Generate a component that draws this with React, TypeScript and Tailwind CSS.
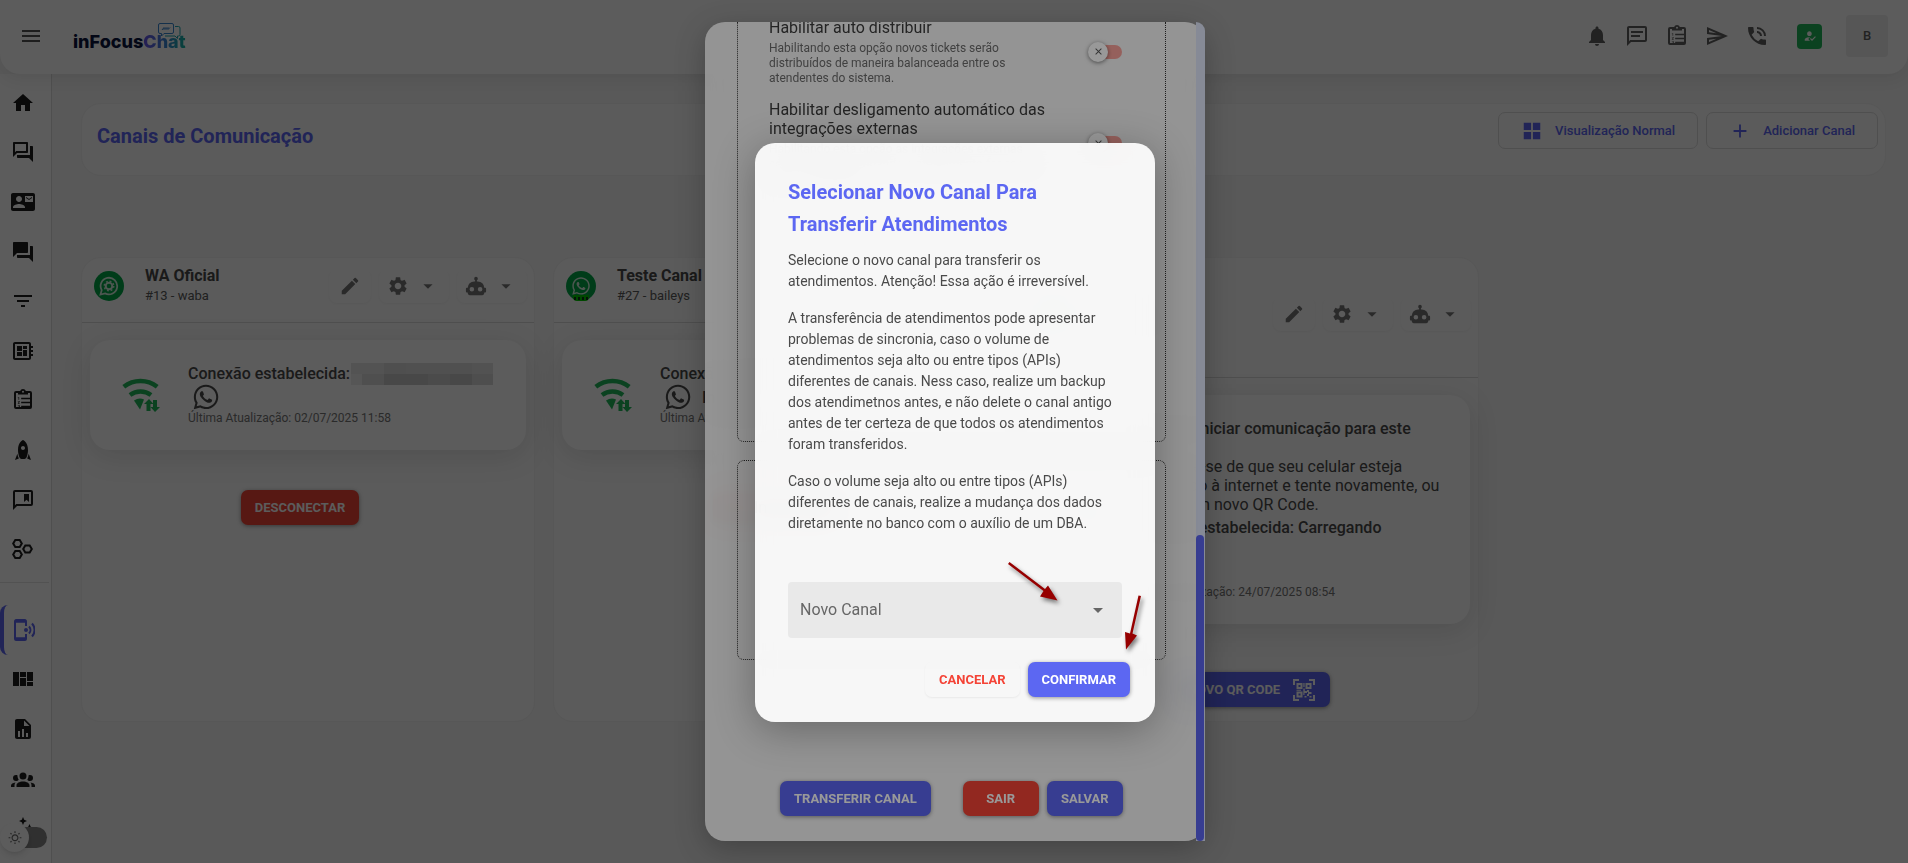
import clsx from "clsx";
import React, { ReactNode } from "react";
import { FaWhatsapp } from "react-icons/fa";
import {
  MdAdd,
  MdArrowDropDown,
  MdClose,
  MdContactMail,
  MdDeveloperBoard,
  MdEdit,
  MdFilterList,
  MdFormatListNumbered,
  MdForum,
  MdHowToReg,
  MdMenu,
  MdNotifications,
  MdOutlineForum,
  MdOutlineSettings,
  MdOutlineWbSunny,
  MdPhoneInTalk,
  MdSettings,
} from "react-icons/md";

const Icon = ({
  d,
  className = "size-6",
}: {
  d: string;
  className?: string;
}) => (
  <svg viewBox="0 0 24 24" className={className} fill="currentColor">
    <path d={d} fillRule="evenodd" />
  </svg>
);

const paths = {
  home: "M10,20V14H14V20H19V12H22L12,3L2,12H5V20H10Z",
  rocket:
    "M20 22L16.14 20.45C16.84 18.92 17.34 17.34 17.65 15.73L20 22M7.86 20.45L4 22L6.35 15.73C6.66 17.34 7.16 18.92 7.86 20.45M12 2C12 2 17 4 17 12C17 15.1 16.25 17.75 15.33 19.83C15 20.55 14.29 21 13.5 21H10.5C9.71 21 9 20.55 8.67 19.83C7.76 17.75 7 15.1 7 12C7 4 12 2 12 2M12 12C13.1 12 14 11.1 14 10C14 8.9 13.1 8 12 8C10.9 8 10 8.9 10 10C10 11.1 10.9 12 12 12Z",
  bookmark:
    "M20,2A2,2 0 0,1 22,4V16A2,2 0 0,1 20,18H6L2,22V4A2,2 0 0,1 4,2H20M4,4V17.17L5.17,16H20V4H4M13,6H18V14L15.5,11.8L13,14V6Z",
  panels: "M2,5H8V19H2V5M9,5H15V10H9V5M9,11H15V19H9V11M16,5H22V14H16V5M16,15H22V19H16V15Z",
  report:
    "M13,9H18.5L13,3.5V9M6,2H14L20,8V20A2,2 0 0,1 18,22H6C4.89,22 4,21.1 4,20V4C4,2.89 4.89,2 6,2M7,20H9V14H7V20M11,20H13V12H11V20M15,20H17V16H15V20Z",
  group:
    "M12,5.5A3.5,3.5 0 0,1 15.5,9A3.5,3.5 0 0,1 12,12.5A3.5,3.5 0 0,1 8.5,9A3.5,3.5 0 0,1 12,5.5M5,8C5.56,8 6.08,8.15 6.53,8.42C6.38,9.85 6.8,11.27 7.66,12.38C7.16,13.34 6.16,14 5,14A3,3 0 0,1 2,11A3,3 0 0,1 5,8M19,8A3,3 0 0,1 22,11A3,3 0 0,1 19,14C17.84,14 16.84,13.34 16.34,12.38C17.2,11.27 17.62,9.85 17.47,8.42C17.92,8.15 18.44,8 19,8M5.5,18.25C5.5,16.18 8.41,14.5 12,14.5C15.59,14.5 18.5,16.18 18.5,18.25V20H5.5V18.25M0,20V18.5C0,17.11 1.89,15.94 4.45,15.6C3.86,16.28 3.5,17.22 3.5,18.25V20H0M24,20H20.5V18.25C20.5,17.22 20.14,16.28 19.55,15.6C22.11,15.94 24,17.11 24,18.5V20Z",
  robot:
    "M12,2A2,2 0 0,1 14,4C14,4.74 13.6,5.39 13,5.73V7H14A7,7 0 0,1 21,14H22A1,1 0 0,1 23,15V18A1,1 0 0,1 22,19H21V20A2,2 0 0,1 19,22H5A2,2 0 0,1 3,20V19H2A1,1 0 0,1 1,18V15A1,1 0 0,1 2,14H3A7,7 0 0,1 10,7H11V5.73C10.4,5.39 10,4.74 10,4A2,2 0 0,1 12,2M7.5,13A2.5,2.5 0 0,0 5,15.5A2.5,2.5 0 0,0 7.5,18A2.5,2.5 0 0,0 10,15.5A2.5,2.5 0 0,0 7.5,13M16.5,13A2.5,2.5 0 0,0 14,15.5A2.5,2.5 0 0,0 16.5,18A2.5,2.5 0 0,0 19,15.5A2.5,2.5 0 0,0 16.5,13Z",
  message:
    "M20,2A2,2 0 0,1 22,4V16A2,2 0 0,1 20,18H6L2,22V4C2,2.89 2.9,2 4,2H20M4,4V17.17L5.17,16H20V4H4M6,7H18V9H6V7M6,11H15V13H6V11Z",
  send: "M4 6.03L11.5 9.25L4 8.25L4 6.03M11.5 14.75L4 17.97V15.75L11.5 14.75M2 3L2 10L17 12L2 14L2 21L23 12L2 3Z",
  grid: "M3,11H11V3H3M3,21H11V13H3M13,21H21V13H13M13,3V11H21V3",
};

const Clipboard = () => (
  <svg viewBox="0 0 24 24" className="size-6" fill="currentColor">
    <path
      fillRule="evenodd"
      d="M19,3H14.82C14.4,1.84 13.3,1 12,1S9.6,1.84 9.18,3H5A2,2 0 0,0 3,5V19A2,2 0 0,0 5,21H19A2,2 0 0,0 21,19V5A2,2 0 0,0 19,3M12,2.8A1,1 0 1,1 12,4.8A1,1 0 0,1 12,2.8M5,5H7V6.6H17V5H19V19H5V5Z"
    />
    <MdFormatListNumbered x="5.5" y="6.5" width="13" height="13" />
  </svg>
);

const Hexagons = () => (
  <svg
    viewBox="0 0 24 24"
    className="size-6"
    fill="none"
    stroke="currentColor"
    strokeWidth="2"
  >
    <path d="M4.300 3H8.700L10.800 6.500L8.700 10H4.300L2.200 6.500Z" />
    <path d="M4.300 14H8.700L10.800 17.500L8.700 21H4.300L2.200 17.500Z" />
    <path d="M14.300 8.500H18.700L20.800 12L18.700 15.500H14.300L12.200 12Z" />
  </svg>
);

const CellWireless = () => (
  <svg
    viewBox="0 0 24 24"
    className="size-6"
    fill="none"
    stroke="currentColor"
    strokeWidth="2"
  >
    <path d="M15 8V3.500a1.500 1.500 0 0 0-1.500-1.500h-8A1.500 1.500 0 0 0 4 3.500v17A1.500 1.500 0 0 0 5.500 22h8a1.500 1.500 0 0 0 1.500-1.500V16" />
    <path d="M4 3.200H15M4 20.800H15" strokeWidth="3" />
    <circle cx="15" cy="12" r="2" fill="currentColor" stroke="none" />
    <path d="M18 8.500a5 5 0 0 1 0 7M21 5.500a9.500 9.500 0 0 1 0 13" />
  </svg>
);

const WifiArrows = () => (
  <svg
    viewBox="0 0 38 34"
    className="h-[34px] w-[38px] shrink-0 text-[#21ba5a]"
    fill="currentColor"
  >
    <g fill="none" stroke="currentColor" strokeWidth="4.500">
      <path d="M1.800 8.800a27 27 0 0 1 33.400 0" />
      <path d="M8 17a17.500 17.500 0 0 1 21 0" />
    </g>
    <path d="M12 22.500Q17 19.300 22 21.500L18 31.500Z" />
    <path d="M27 21l4.500 5h-3v7h-4v-7h-2.500zM33 34l-4.500-5h2.500v-7h4v7h3z" />
  </svg>
);

const QrScan = () => (
  <svg viewBox="0 0 24 24" className="size-6" fill="currentColor">
    <path
      d="M2 7V2H7M17 2H22V7M22 17V22H17M7 22H2V17"
      fill="none"
      stroke="currentColor"
      strokeWidth="2"
    />
    <path
      fillRule="evenodd"
      d="M4.500 5H10.500V11H4.500ZM6.500 7V9H8.500V7ZM13.500 5H19.500V11H13.500ZM15.500 7V9H17.500V7ZM4.500 13.500H10.500V19.500H4.500ZM6.500 15.500V17.500H8.500V15.500ZM11.300 5H12.600V9H11.300ZM11.300 10.500H12.800V13H15V15H12.500V17H11.300ZM15 12H17V14H19.500V16H17V18H15V16H16V14H15ZM12.500 18H14.500V19.500H12.500ZM17.500 18H19.500V19.500H17.500ZM4.500 11.700H9V12.700H4.500Z"
    />
  </svg>
);

const Logo = () => (
  <div className="relative mt-1 ml-[30px] h-[30px] w-[112px]">
    <p className="absolute bottom-0 left-0 font-['Inter'] text-[18px] leading-[22px] font-extrabold text-[#0b1440]">
      inFocus
      <span className="bg-linear-to-r from-[#6b50ee] via-[#3a82d8] to-[#12b8a0] bg-clip-text text-transparent">
        Chat
      </span>
    </p>
    <svg
      viewBox="0 0 23 17"
      className="absolute top-0 right-1 h-[17px] w-[23px]"
      fill="none"
      stroke="#3a86d0"
      strokeWidth="1"
    >
      <path d="M2 .500h12a1.500 1.500 0 0 1 1.500 1.500v7A1.500 1.500 0 0 1 14 10.500H6L3.500 13v-2.500H2A1.500 1.500 0 0 1 .500 9V2A1.500 1.500 0 0 1 2 .500Z" />
      <path
        d="M17 3.500h3.500a1.500 1.500 0 0 1 1.500 1.500v6.500a1.500 1.500 0 0 1-1.500 1.500h-1v2.500L17 13H7"
        stroke="#1fa8b0"
      />
      <path d="M4 7l2-2.500v2l2-2v2l2-2v2l2-2" />
    </svg>
  </div>
);

const Header = () => (
  <header className="relative z-10 flex h-[74px] items-center rounded-b-[20px] bg-white pr-5 pb-[2px] pl-[19px] shadow-[0_4px_16px_rgba(0,0,0,0.08)]">
    <button aria-label="Menu" className="text-[#555]">
      <MdMenu className="size-6" />
    </button>
    <Logo />
    <div className="ml-auto flex items-center text-[#616161]">
      <nav className="flex items-center gap-4">
        <button aria-label="Notificações">
          <MdNotifications className="size-6" />
        </button>
        <button aria-label="Mensagens">
          <Icon d={paths.message} />
        </button>
        <button aria-label="Tarefas">
          <Clipboard />
        </button>
        <button aria-label="Enviar">
          <Icon d={paths.send} />
        </button>
        <button aria-label="Ligações">
          <MdPhoneInTalk className="size-6" />
        </button>
      </nav>
      <button
        aria-label="Online"
        className="ml-7 flex size-[25px] items-center justify-center rounded-sm bg-[#21ba5a] text-white"
      >
        <MdHowToReg className="size-[14px]" />
      </button>
      <button className="ml-6 size-[42px] rounded-sm bg-[#f0f0f0] text-[13px] font-medium">
        B
      </button>
    </div>
  </header>
);

const MenuItem = ({
  children,
  active = false,
}: {
  children: ReactNode;
  active?: boolean;
}) => (
  <a
    href="#"
    className={clsx(
      "flex flex-1 items-center pl-[7px]",
      active
        ? "rounded-l-lg border-l-4 border-[#5c67f2] text-[#5c67f2]"
        : "ml-1 text-[#1d1d1d]"
    )}
  >
    {children}
  </a>
);

const Sidebar = () => (
  <aside className="relative w-[52px] shrink-0 overflow-hidden border-r border-[#dcdcdc] bg-white pt-1">
    <div className="flex h-[496px] flex-col">
      <MenuItem>
        <Icon d={paths.home} />
      </MenuItem>
      <MenuItem>
        <MdOutlineForum className="size-6" />
      </MenuItem>
      <MenuItem>
        <MdContactMail className="size-6" />
      </MenuItem>
      <MenuItem>
        <MdForum className="size-6" />
      </MenuItem>
      <MenuItem>
        <MdFilterList className="size-6" />
      </MenuItem>
      <MenuItem>
        <MdDeveloperBoard className="size-6" />
      </MenuItem>
      <MenuItem>
        <Clipboard />
      </MenuItem>
      <MenuItem>
        <Icon d={paths.rocket} />
      </MenuItem>
      <MenuItem>
        <Icon d={paths.bookmark} />
      </MenuItem>
      <MenuItem>
        <Hexagons />
      </MenuItem>
    </div>
    <hr className="mt-2 mr-[2px] mb-[22px] border-[#e4e4e4]" />
    <div className="flex h-[248px] flex-col">
      <MenuItem active>
        <CellWireless />
      </MenuItem>
      <MenuItem>
        <Icon d={paths.panels} />
      </MenuItem>
      <MenuItem>
        <Icon d={paths.report} />
      </MenuItem>
      <MenuItem>
        <Icon d={paths.group} />
      </MenuItem>
      <MenuItem>
        <Icon d="M12 1l1.200 2.800L16 5l-2.800 1.200L12 9l-1.200-2.800L8 5l2.800-1.200zM18.500 8l1.200 2.800 2.800 1.200-2.800 1.200-1.200 2.800-1.200-2.800-2.800-1.200 2.800-1.200z" />
      </MenuItem>
    </div>
    <button
      aria-label="Tema"
      className="absolute bottom-3 left-0 h-7 w-[47px]"
    >
      <span className="absolute top-1 right-0 h-[21px] w-9 rounded-full bg-[#868686]" />
      <span className="absolute top-0 left-0 flex size-[29px] items-center justify-center rounded-full bg-white text-[#6a6a6a] shadow-md">
        <MdOutlineWbSunny className="size-[14px]" />
      </span>
    </button>
  </aside>
);

const Button = ({
  color,
  children,
  className,
}: {
  color: "primary" | "negative" | "flat";
  children: ReactNode;
  className?: string;
}) => (
  <button
    className={clsx(
      "flex h-[35px] items-center justify-center gap-3 rounded-[7px] px-[14px] text-[13px] font-bold whitespace-nowrap",
      color === "primary" &&
        "bg-[#5c67f2] text-white shadow-[0_1px_4px_rgba(0,0,0,0.4)]",
      color === "negative" &&
        "bg-[#f44336] text-white shadow-[0_1px_4px_rgba(0,0,0,0.4)]",
      color === "flat" && "text-[#f44336] shadow-[0_1px_2px_rgba(0,0,0,0.06)]",
      className
    )}
  >
    {children}
  </button>
);

const CardActions = () => (
  <div className="flex shrink-0 gap-2 text-[#777]">
    <button
      aria-label="Editar"
      className="flex h-[34px] w-[42px] items-center justify-center rounded-lg shadow-[0_1px_2px_rgba(0,0,0,0.04)]"
    >
      <MdEdit className="size-[22px]" />
    </button>
    <button
      aria-label="Configurações"
      className="flex h-[34px] w-[70px] items-center justify-between rounded-lg pr-[10px] pl-2 shadow-[0_1px_2px_rgba(0,0,0,0.04)]"
    >
      <MdSettings className="size-[22px]" />
      <MdArrowDropDown className="size-[22px]" />
    </button>
    <button
      aria-label="Chatbot"
      className="flex h-[34px] w-[70px] items-center justify-between rounded-lg pr-[10px] pl-2 shadow-[0_1px_2px_rgba(0,0,0,0.04)]"
    >
      <Icon d={paths.robot} className="size-[22px]" />
      <MdArrowDropDown className="size-[22px]" />
    </button>
  </div>
);

const ChannelCard = ({
  badge,
  name,
  detail,
  tall = false,
  action,
  children,
}: {
  badge: ReactNode;
  name: string;
  detail: string;
  tall?: boolean;
  action: ReactNode;
  children: ReactNode;
}) => (
  <section className="flex w-[454px] shrink-0 flex-col rounded-[20px] border border-[#f3f3f3] bg-[#fdfdfd]">
    <div
      className={clsx(
        "flex items-center border-b border-[#dadada] pr-[7px] pb-2 pl-3",
        tall ? "h-[120px]" : "h-[65px]"
      )}
    >
      {badge}
      <div className="mr-auto ml-[21px]">
        <h2 className="text-[16px] leading-5 font-bold text-[#4a4a4a]">
          {name}
        </h2>
        <p className="text-[13px] leading-5 text-[#5a5a5a]">{detail}</p>
      </div>
      <CardActions />
    </div>
    <div className="mx-2 mt-[17px] flex items-center rounded-[20px] bg-white py-6 pr-4 pl-8 shadow-[0_6px_30px_rgba(0,0,0,0.12)]">
      <WifiArrows />
      <div className="ml-7 text-[16px] leading-[19px] text-[#4a4a4a]">
        {children}
      </div>
    </div>
    <div
      className={clsx(
        "mb-[14px] flex justify-center",
        tall ? "mt-12" : "mt-10 pr-4"
      )}
    >
      {action}
    </div>
  </section>
);

const WabaBadge = () => (
  <span className="flex size-[30px] shrink-0 items-center justify-center rounded-full bg-[#00a848] text-[#d5f0df]">
    <svg viewBox="0 0 20 20" className="size-5" fill="none">
      <path
        d="M1.500 18.500l1.200-4.300A8.300 8.300 0 1 1 6 17.400Z"
        stroke="currentColor"
        strokeWidth="1.800"
      />
      <circle
        cx="10"
        cy="10"
        r="3.300"
        stroke="currentColor"
        strokeWidth="2"
      />
      <circle
        cx="10"
        cy="10"
        r="4.800"
        stroke="currentColor"
        strokeWidth="1.400"
        strokeDasharray="1.900 1.870"
      />
    </svg>
  </span>
);

const BaileysBadge = () => (
  <span className="relative flex size-[30px] shrink-0 items-center justify-center rounded-full bg-[#00a848] text-[#d5f0df]">
    <FaWhatsapp className="size-5" />
    <span className="absolute bottom-0 flex h-[6px] w-4 items-center justify-center gap-[2px] rounded-b-sm bg-[#00c800]">
      <i className="h-[3px] w-[2px] bg-[#0a3a14]" />
      <i className="h-[3px] w-[2px] bg-[#0a3a14]" />
      <i className="h-[3px] w-[2px] bg-[#0a3a14]" />
      <i className="h-[3px] w-[2px] bg-[#0a3a14]" />
    </span>
  </span>
);

const MaskedNumber = () => (
  <span className="ml-px inline-flex h-[22px] w-[142px] flex-col align-middle">
    <span className="flex h-[11px] bg-[#e0e0e0]">
      <span className="w-[33px] bg-[#e8e8e8]" />
      <span className="w-[22px] bg-[#dddddd]" />
      <span className="ml-auto w-[21px] bg-[#e4e4e4]" />
    </span>
    <span className="flex h-[11px]">
      <span className="w-[11px] bg-[#eeeeee]" />
      <span className="w-[22px] bg-[#dcdcdc]" />
      <span className="w-[44px] bg-[#c8c8c8]" />
      <span className="w-[22px] bg-[#d2d2d2]" />
      <span className="w-[22px] bg-[#c9c9c9]" />
      <span className="w-[21px] bg-[#dadada]" />
    </span>
  </span>
);

const Channels = () => (
  <main className="min-w-0 flex-1 overflow-hidden pt-[29px] pr-[22px] pl-[29px]">
    <div className="flex h-[73px] items-start rounded-[20px] border border-[#f3f3f3] bg-[#fdfdfd] pt-2 pr-[7px] pl-[15px]">
      <h1 className="mt-2 text-[20px] leading-8 font-bold text-[#5c67f2]">
        Canais de Comunicação
      </h1>
      <div className="ml-auto flex gap-2 text-[13px] font-medium text-[#5c67f2]">
        <button className="flex h-[37px] items-center gap-3 rounded-[7px] border border-[#dcdcdc] px-[22px]">
          <Icon d={paths.grid} className="size-[22px]" />
          Visualização Normal
        </button>
        <button className="flex h-[37px] items-center gap-3 rounded-[7px] border border-[#dcdcdc] px-[22px]">
          <MdAdd className="size-[22px]" />
          Adicionar Canal
        </button>
      </div>
    </div>
    <div className="mt-[81px] flex gap-[18px]">
      <ChannelCard
        badge={<WabaBadge />}
        name="WA Oficial"
        detail="#13 - waba"
        action={<Button color="negative">DESCONECTAR</Button>}
      >
        <p className="flex h-[19px] items-center font-medium">
          Conexão estabelecida:
          <MaskedNumber />
        </p>
        <FaWhatsapp className="mx-1 size-7" />
        <p className="text-[12px] leading-[15px] text-[#777]">
          Última Atualização: 02/07/2025 11:58
        </p>
      </ChannelCard>
      <ChannelCard
        badge={<BaileysBadge />}
        name="Teste Canal"
        detail="#27 - baileys"
        action={<Button color="negative">DESCONECTAR</Button>}
      >
        <p className="font-medium">Conexão estabelecida:</p>
        <p className="flex items-center font-medium">
          <FaWhatsapp className="mx-1 size-7" />
          <span className="ml-[6px]">Infocus</span>
        </p>
        <p className="text-[12px] leading-[15px] text-[#777]">
          Última Atualização: 02/07/2025 11:58
        </p>
      </ChannelCard>
      <ChannelCard
        tall
        badge={<BaileysBadge />}
        name="Suporte"
        detail="#28 - baileys"
        action={
          <Button color="primary">
            NOVO QR CODE
            <QrScan />
          </Button>
        }
      >
        <p className="font-medium">
          Falha ao iniciar comunicação para este
          <br />
          canal
        </p>
        <p>
          Certifique-se de que seu celular esteja
          <br />
          conectado à internet e tente novamente, ou
          <br />
          solicite um novo QR Code.
        </p>
        <p className="mt-1 font-medium">Conexão estabelecida: Carregando</p>
        <p className="mt-12 text-[12px] leading-[15px] text-[#777]">
          Última Atualização: 24/07/2025 08:54
        </p>
      </ChannelCard>
    </div>
  </main>
);

const Setting = ({
  id,
  title,
  caption,
}: {
  id: string;
  title: string;
  caption: string;
}) => (
  <div className="flex items-center justify-between">
    <label htmlFor={id} className="w-[290px]">
      <span className="block text-[16px] leading-[19px] text-[#3c3c3c]">
        {title}
      </span>
      <span className="mt-1 block pr-4 text-[12px] leading-[15px] text-[#6c6c6c]">
        {caption}
      </span>
    </label>
    <span className="relative mr-3 flex h-5 w-[34px] items-center">
      <input
        id={id}
        type="checkbox"
        className="ml-1 h-[14px] w-full appearance-none rounded-full bg-[#f9a19a]"
      />
      <span className="pointer-events-none absolute left-0 flex size-5 items-center justify-center rounded-full bg-white text-[#555] shadow-[0_1px_4px_rgba(0,0,0,0.5)]">
        <MdClose className="size-[11px]" />
      </span>
    </span>
  </div>
);

const ChannelDialog = () => (
  <div className="fixed inset-0 z-20 flex items-center justify-center bg-black/40 pl-[2px]">
    <div
      role="dialog"
      className="flex h-[95vh] w-[500px] rounded-[20px] bg-white/92 shadow-[0_8px_30px_rgba(0,0,0,0.25)] backdrop-blur-[10px]"
    >
      <div className="flex min-w-0 flex-1 flex-col overflow-hidden rounded-l-[20px] pr-[30px] pl-8">
        <div className="flex h-[420px] shrink-0 flex-col gap-[14px] rounded-b-[7px] border border-t-0 border-dotted border-[#333] px-[31px]">
          <div className="-mt-1">
            <Setting
              id="auto-distribuir"
              title="Habilitar auto distribuir"
              caption="Habilitando esta opção novos tickets serão distribuídos de maneira balanceada entre os atendentes do sistema."
            />
          </div>
          <Setting
            id="desligamento"
            title="Habilitar desligamento automático das integrações externas"
            caption="Habilitando esta opção as integrações externas serão desligadas quando o atendimento for aceito por um atendente."
          />
        </div>
        <div className="mt-[18px] h-[200px] shrink-0 rounded-[7px] border border-dotted border-[#333] px-4 pt-[37px]">
          <p className="text-[16px] leading-[19px] text-[#3c3c3c]">
            Importação
          </p>
        </div>
        <div className="mt-auto mb-[25px] flex pl-[43px]">
          <Button color="primary">TRANSFERIR CANAL</Button>
          <Button color="negative" className="ml-8 w-[76px]">
            SAIR
          </Button>
          <Button color="primary" className="ml-2 w-[76px]">
            SALVAR
          </Button>
        </div>
      </div>
      <div className="flex w-[9px] flex-col justify-end rounded-tr-[20px] bg-[#dfe6fa]">
        <div className="mr-px h-[306px] rounded-full bg-[#5c67f2]" />
      </div>
    </div>
  </div>
);

const TransferDialog = () => (
  <div className="fixed inset-0 z-30 flex items-center justify-center bg-black/40 pt-px pl-[2px]">
    <div
      role="dialog"
      className="relative w-[400px] rounded-[20px] bg-white/92 px-[33px] pt-[33px] pb-[25px] text-[14px] leading-[21px] text-[#4a4a4a] shadow-[0_8px_40px_rgba(0,0,0,0.3)] backdrop-blur-[10px]"
    >
      <h2 className="text-[20px] leading-8 font-bold text-[#5c67f2]">
        Selecionar Novo Canal Para Transferir Atendimentos
      </h2>
      <p className="mt-[10px]">
        Selecione o novo canal para transferir os atendimentos. Atenção! Essa
        ação é irreversível.
      </p>
      <p className="mt-4">
        A transferência de atendimentos pode apresentar problemas de sincronia,
        caso o volume de atendimentos seja alto ou entre tipos (APIs) diferentes
        de canais. Ness caso, realize um backup dos atendimetnos antes, e não
        delete o canal antigo antes de ter certeza de que todos os atendimentos
        foram transferidos.
      </p>
      <p className="mt-4">
        Caso o volume seja alto ou entre tipos (APIs) diferentes de canais,
        realize a mudança dos dados diretamente no banco com o auxílio de um
        DBA.
      </p>
      <div className="relative mt-12 flex h-14 items-center">
        <select
          id="novo-canal"
          className="h-full w-full appearance-none rounded bg-[#e9e9e9]"
        >
          <option value=""></option>
        </select>
        <label
          htmlFor="novo-canal"
          className="absolute left-3 text-[16px] text-[#666]"
        >
          Novo Canal
        </label>
        <MdArrowDropDown className="pointer-events-none absolute right-3 size-6 text-[#666]" />
      </div>
      <div className="mt-6 -mr-2 flex justify-end gap-2">
        <Button color="flat">CANCELAR</Button>
        <Button color="primary">CONFIRMAR</Button>
      </div>
      <svg
        viewBox="0 0 140 100"
        className="pointer-events-none absolute right-[6px] bottom-[66px] h-[100px] w-[140px] overflow-visible drop-shadow-[2px_3px_2px_rgba(0,0,0,0.5)]"
        fill="#960000"
      >
        <path d="M-1 8L.500 6L36 33L39 29.500L48.500 44.500L31 40.500L34.500 35Z" />
        <path d="M129.500 39.500L132 40L123.500 77.500L128 79.500L117 93.500L116 76L121 77.500Z" />
      </svg>
    </div>
  </div>
);

const App = () => (
  <div className="flex h-screen flex-col overflow-hidden bg-[#f7f7f7] font-['Roboto',sans-serif]">
    <Header />
    <div className="flex min-h-0 flex-1">
      <Sidebar />
      <Channels />
    </div>
    <ChannelDialog />
    <TransferDialog />
  </div>
);

export default App;
